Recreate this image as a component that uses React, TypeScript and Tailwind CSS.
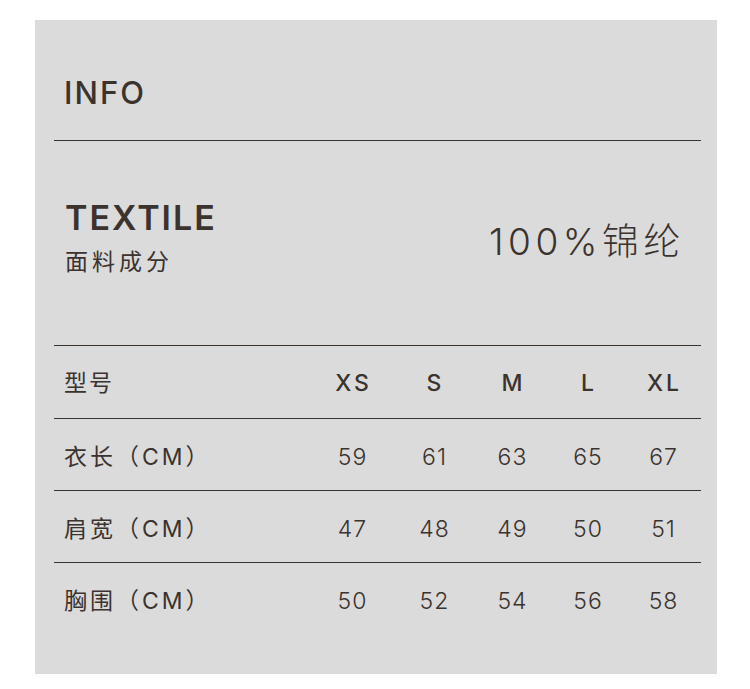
import React from "react";

const FONT = 'Inter, "Noto Sans CJK SC", sans-serif';
const sizes = ["XS", "S", "M", "L", "XL"];
const rows: { label: string; values: string[] }[] = [
  { label: "衣长（CM）", values: ["59", "61", "63", "65", "67"] },
  { label: "肩宽（CM）", values: ["47", "48", "49", "50", "51"] },
  { label: "胸围（CM）", values: ["50", "52", "54", "56", "58"] },
];

const GRID = "grid grid-cols-[256px_84px_80px_76px_75px_76px]";

export default function App() {
  return (
    <div className="w-[750px] h-[689px] bg-white pt-[20px] pl-[35px]" style={{ fontFamily: FONT }}>
      <div className="w-[682px] h-[654px] bg-[#dbdbdb] pl-[19px] pr-[16px] text-[#3b332e]">
        {/* INFO */}
        <div className="h-[120px] pt-[57px] pl-[10px]">
          <div className="text-[31px] leading-none font-medium tracking-[2px]">INFO</div>
        </div>
        <div className="h-px bg-[#3b332e]" />

        {/* TEXTILE */}
        <div className="h-[204px] flex justify-between">
          <div className="pt-[60px] pl-[11px]">
            <div className="text-[34px] leading-none font-semibold tracking-[2px]">TEXTILE</div>
            <div className="mt-[16px] text-[23px] leading-none tracking-[4px]">面料成分</div>
          </div>
          <div className="pt-[82px] pr-[16px]">
            <div className="text-[37px] leading-none font-light tracking-[4.5px]">100%锦纶</div>
          </div>
        </div>
        <div className="h-px bg-[#3b332e]" />

        {/* Table */}
        <div className={`${GRID} h-[73px] items-center pt-[3px] border-b border-[#3b332e]`}>
          <div className="pl-[10px] text-[23px] leading-none tracking-[2px]">型号</div>
          {sizes.map((s) => (
            <div key={s} className="text-center pl-[3px] text-[23px] leading-none font-medium tracking-[3px]">
              {s}
            </div>
          ))}
        </div>
        {rows.map((r, i) => (
          <div
            key={r.label}
            className={`${GRID} h-[72px] items-center pt-[5px] ${i < rows.length - 1 ? "border-b border-[#3b332e]" : ""}`}
          >
            <div className="pl-[10px] text-[23px] leading-none tracking-[3px]">{r.label}</div>
            {r.values.map((v, j) => (
              <div key={j} className="text-center pl-[1px] text-[23px] leading-none font-light tracking-[1px]">
                {v}
              </div>
            ))}
          </div>
        ))}
      </div>
    </div>
  );
}
